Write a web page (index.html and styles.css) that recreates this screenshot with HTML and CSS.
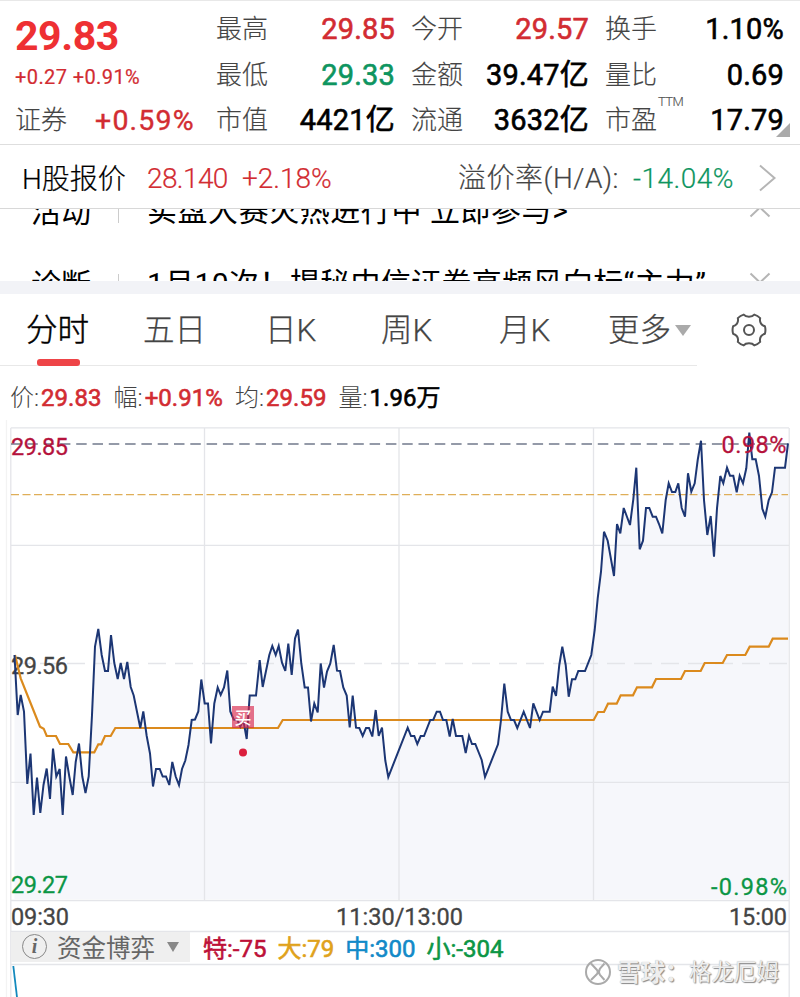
FILE: index.html
```html
<!DOCTYPE html>
<html lang="zh-CN">
<head>
    <meta charset="UTF-8">
    <meta name="viewport" content="width=device-width, initial-scale=1.0">
    <title>证券行情</title>
    <link rel="stylesheet" href="styles.css">
</head>
<body>
    <div class="app">
        <section class="quote">
            <div class="price-col">
                <div class="price">29.83</div>
                <div class="change">+0.27 +0.91%</div>
                <div class="sector"><span class="label">证券</span><span class="sector-value">+0.59%</span></div>
            </div>
            <div class="stats">
                <div class="stat"><span class="label">最高</span><span class="value up">29.85</span></div>
                <div class="stat"><span class="label">今开</span><span class="value up">29.57</span></div>
                <div class="stat"><span class="label">换手</span><span class="value">1.10%</span></div>
                <div class="stat"><span class="label">最低</span><span class="value down">29.33</span></div>
                <div class="stat"><span class="label">金额</span><span class="value">39.47亿</span></div>
                <div class="stat"><span class="label">量比</span><span class="value">0.69</span></div>
                <div class="stat"><span class="label">市值</span><span class="value">4421亿</span></div>
                <div class="stat"><span class="label">流通</span><span class="value">3632亿</span></div>
                <div class="stat"><span class="label">市盈<span class="ttm">TTM</span></span><span class="value">17.79</span></div>
            </div>
            <div class="expand-corner"></div>
        </section>

        <section class="hshare">
            <span class="hshare-name">H股报价</span>
            <span class="hshare-price">28.140</span>
            <span class="hshare-change">+2.18%</span>
            <span class="premium-label">溢价率(H/A):</span>
            <span class="premium-value">-14.04%</span>
            <svg class="chevron" width="18" height="28" viewBox="0 0 18 28"><path d="M1 1.5 L15.5 14 L1 26.5"/></svg>
        </section>

        <section class="notices">
            <div class="notice">
                <span class="notice-tag">活动</span><i class="divider"></i>
                <span class="notice-text">实盘大赛火热进行中 立即参与&gt;</span>
                <svg class="arrow arrow-up" width="22" height="12" viewBox="0 0 22 12"><path d="M1.5 10.5 L11 1.5 L20.5 10.5"/></svg>
            </div>
            <div class="notice">
                <span class="notice-tag">诊断</span><i class="divider"></i>
                <span class="notice-text second">1月10次！揭秘中信证券高频风向标“主力”</span>
                <svg class="arrow arrow-down" width="22" height="12" viewBox="0 0 22 12"><path d="M1.5 1.5 L11 10.5 L20.5 1.5"/></svg>
            </div>
        </section>

        <nav class="tabs">
            <div class="tab-list">
                <span class="tab active">分时</span>
                <span class="tab">五日</span>
                <span class="tab">日K</span>
                <span class="tab">周K</span>
                <span class="tab">月K</span>
                <span class="tab more">更多<i class="triangle"></i></span>
            </div>
            <svg class="gear" width="36" height="36" viewBox="-18 -18 36 36">
                <path d="M-5.3 -15.4 Q-3.7 -13.3 0 -13.3 Q3.7 -13.3 5.3 -15.4 Q8.7 -14.4 11.2 -11.9 Q10.4 -8.8 12 -6.4 Q13.3 -4.5 15.9 -3.7 Q17 0 15.9 3.7 Q13.3 4.5 12 6.4 Q10.4 8.8 11.2 11.9 Q8.7 14.4 5.3 15.4 Q3.7 13.3 0 13.3 Q-3.7 13.3 -5.3 15.4 Q-8.7 14.4 -11.2 11.9 Q-10.4 8.8 -12 6.4 Q-13.3 4.5 -15.9 3.7 Q-17 0 -15.9 -3.7 Q-13.3 -4.5 -12 -6.4 Q-10.4 -8.8 -11.2 -11.9 Q-8.7 -14.4 -5.3 -15.4 Z"/>
                <circle r="5"/>
            </svg>
        </nav>

        <div class="summary">
            <span class="item">价:<b class="up">29.83</b></span>
            <span class="item">幅:<b class="up">+0.91%</b></span>
            <span class="item">均:<b class="up">29.59</b></span>
            <span class="item">量:<b>1.96万</b></span>
        </div>

        <div class="chart-area">
            <svg class="chart" width="800" height="577" viewBox="0 420 800 577">
                <path class="area" id="area"/>

                <!-- grid -->
                <g class="grid">
                    <path d="M10.8 428 V997 M789.2 428 V997 M10.8 427.8 H789 M10.8 900.5 H789"/>
                    <path d="M204.5 428 V900 M399 428 V900 M593.5 428 V900 M11 545.3 H789 M11 782.3 H789"/>
                    <path class="mid" d="M13 663.5 H789"/>
                    <path d="M11 931.5 H789 M11 964.5 H789"/>
                    <path class="edge" d="M6.5 420 V997"/>
                </g>
                <path class="high-line" d="M11 444 H788"/>
                <path class="last-line" d="M11 494.6 H788"/>
                <text class="axis mid-text" x="11" y="673.5" textLength="57">29.56</text>

                <!-- average -->
                <path class="avg" d="M15 655 L20.7 678.3 40 726.7 43.7 728.7 46.7 736 56 736 60 744 68.3 744 73.3 752.3 94.3 752.3 98.3 744.3 101.3 744.3 105 736 110.7 736 115.3 728 278 728 282.7 720 593.7 720 598 712 604 712 608 703.7 616.7 703.7 620.7 695.3 633 695.3 637 687.3 652 687.3 656 679 681 679 685 671 700.7 671 704.7 663 722.7 663 727 655 745.3 655 749.7 646.7 768.7 646.7 772.7 638.7 788 638.7"/>

                <!-- price -->
                <path class="line" id="line" d="M14.5 655 L17.7 715 20.7 695 24 711.5 27.3 784 30.5 753.5 33.7 815 37 777.5 40.3 813 43.5 785 46.7 768.5 50 799 53 748.5 56.3 776.5 59.7 769 62.7 815 66 756.5 69.3 776.5 72.7 795 75.7 762 79 743.5 82.3 776.5 85.5 793 88.7 776.5 92 715 95 646.5 98.3 629 101.7 655 105 671 108 671 111 635 114.3 663 117.7 679 120.7 663 124 679 127.3 662 130.7 687 133.7 695.5 140.3 728 143.3 711.5 146.7 736 150 753.5 153 786.5 156 769 159.7 769 162.7 776.5 166 776.5 169.3 785 172.3 762 175.7 776.5 179 785 182 769 185.3 760.5 188.5 745 191.7 720 195 719.5 198.3 711.5 201.3 679.5 204.7 703.5 208 703.5 211 743.5 214.3 703.5 217.7 687.5 220.7 695 224 687.5 227.3 670.5 230.3 711.5 233.7 719.5 237.3 720 240.3 726.5 243.3 720 246.7 739 249.7 695.5 256 695.5 259.7 660 262.7 687 269.3 655 272.3 646 275.7 655 278.7 646 282 662.7 285.3 671 288.3 643.5 291.7 675 295 638.5 298 629.5 301.3 663.5 304.7 687.5 308 687.5 311 721.5 314.3 703.5 317.7 712.5 320.7 663.5 324 687.5 327 671.5 330.3 663.5 333.7 645 337 670.7 340 671 343.3 687.5 346.7 695.5 349.7 727.5 352.7 695.5 356 727.7 359.3 728 362.7 736 366 728 369 728 372.3 736.5 375.7 710 378.7 736 382 727.5 385.3 760.5 388.3 777 407.7 727.7 411 736 414.3 736 417.3 744 420.7 736 424 736 430.3 720 433.3 719.7 436.7 711.7 440 711.7 443 720 446.3 720 449.7 736.5 452.7 719 456 736 462.3 736 465.7 753 469 736 472 744 475.3 744 481.7 760 485 777 498 744.3 501 720 504.3 683.5 507.7 711.7 511 720 514 720 517.3 728 523.7 711.7 530 728 533.3 703.3 539.7 720 543 711.7 549.7 711.7 552.7 686.7 556 696 559.3 665 562.3 646.7 565.7 665 568.7 696.7 572 679.3 575.3 679.3 578.3 671 585 671 591.3 655 594.7 630 597.7 598.3 601 571.7 604 531.7 607.7 540.7 614 576 617 524 620.3 533.3 623.7 508 630 525 633.3 499.3 636.3 467.7 638 510 639.7 549.3 643 540.7 646 508 649.3 508 652.7 516.7 656 516.7 659 524 662.3 533.3 665.7 500 668.7 483.3 672 492 675.3 492 678.3 483.3 681.7 508 685 516.7 688 473.3 691.3 491.7 694.7 483.3 697.7 460 701 440.7 704 500 707.3 535 710.7 516 714 556.7 717 508.3 720.3 476 723.3 483.3 727 467.7 730 475.7 733.3 475.7 736.7 492.3 739.7 475.7 743 483.3 746.3 468.3 749.3 432.7 752.3 459.3 755.7 459.3 759 476 762.3 508.7 765.3 516.7 768.7 500 772 492.3 775 467.7 785 467.7 788 443.3"/>

                <!-- buy marker -->
                <rect class="buy-box" x="232" y="706" width="22" height="22"/>
                <text class="buy-text" x="243" y="723.5">买</text>
                <circle class="buy-dot" cx="243" cy="752.5" r="4"/>

                <text class="axis high-text" x="11" y="454.5" textLength="57">29.85</text>
                <text class="axis high-text" x="721.5" y="453" textLength="65">0.98%</text>
                <text class="axis low-text" x="11" y="893" textLength="57">29.27</text>
                <text class="axis low-text" x="711" y="895" textLength="76">-0.98%</text>
                <text class="axis" x="11" y="925" textLength="58">09:30</text>
                <text class="axis" x="336" y="925" textLength="127">11:30/13:00</text>
                <text class="axis" x="729" y="925" textLength="58">15:00</text>
                <path class="flow-line" d="M13.3 966 L17 997"/>
            </svg>

            <div class="flow">
                <div class="flow-picker">
                    <span class="info">i</span>
                    <span class="flow-name">资金博弈</span>
                    <i class="flow-triangle"></i>
                </div>
                <span class="flow-item huge">特:-75</span>
                <span class="flow-item big">大:79</span>
                <span class="flow-item middle">中:300</span>
                <span class="flow-item small">小:-304</span>
            </div>

            <div class="watermark">
                <svg width="28" height="28" viewBox="0 0 28 28">
                    <circle cx="14" cy="14" r="12"/>
                    <path d="M7 5.5 L13 12 Q14.5 14 13 16 L7 22 M20.5 5.5 L16 10.5 Q14 14 16 17 L20.5 22"/>
                </svg>
                <span class="wm-brand">雪球：</span><span class="wm-user">格龙厄姆</span>
            </div>
        </div>
    </div>

    <script>
        // Close the price line down to the bottom of the chart for the fill
        const line = document.getElementById('line');
        const area = document.getElementById('area');
        area.setAttribute('d', line.getAttribute('d') + ' V899 H14.5 Z');
    </script>
</body>
</html>
```

FILE: styles.css
```css
* {
    box-sizing: border-box;
}

body {
    margin: 0;
    background-color: #fff;
    color: #000;
    font-family: Roboto, "Noto Sans CJK SC", sans-serif;
}

.app {
    width: 800px;
    height: 997px;
    overflow: hidden;
}

.up {
    color: #d22c32;
}

.down {
    color: #0e9560;
}

/* quote header */
.quote {
    position: relative;
    display: flex;
    height: 145px;
    padding: 6px 15px 0;
    border-top: 1px solid #e8e8e8;
    border-bottom: 1px solid #dedede;
}

.price-col {
    width: 202px;
}

.price {
    height: 56px;
    line-height: 58px;
    font-size: 41px;
    font-weight: 700;
    letter-spacing: -0.4px;
    color: #ee3033;
}

.change {
    height: 28px;
    line-height: 29px;
    font-size: 20px;
    letter-spacing: 0.4px;
    color: #d22c32;
    white-space: nowrap;
    -webkit-text-stroke: 0.2px;
}

.sector {
    display: flex;
    height: 46px;
    line-height: 59px;
}

.label {
    position: relative;
    font-size: 26px;
    font-weight: 300;
    color: #444;
    -webkit-text-stroke: 0.15px;
}

.sector-value {
    margin-left: 28px;
    font-size: 28.5px;
    letter-spacing: 1.2px;
    color: #d22c32;
    -webkit-text-stroke: 0.4px;
}

.stats {
    display: grid;
    grid-template-columns: 179px 178px 179px;
    grid-auto-rows: 45.5px;
    column-gap: 16px;
    margin-left: -1px;
}

.stat {
    display: flex;
    justify-content: space-between;
    line-height: 45px;
    white-space: nowrap;
}

.value {
    font-size: 29px;
    letter-spacing: 0.2px;
    -webkit-text-stroke: 0.6px;
}

.ttm {
    position: absolute;
    left: 53px;
    top: -19px;
    font-size: 13px;
    letter-spacing: -0.6px;
    color: #555;
}

.expand-corner {
    position: absolute;
    right: 10px;
    bottom: 7px;
    border-left: 14px solid transparent;
    border-bottom: 14px solid #aaa;
}

/* H share row */
.hshare {
    display: flex;
    align-items: center;
    height: 64px;
    padding: 2px 22px 0;
    border-bottom: 1px solid #d8d8d8;
    font-size: 28px;
    font-weight: 300;
    white-space: nowrap;
    -webkit-text-stroke: 0.2px;
}

.hshare-name {
    width: 125px;
    padding-bottom: 2px;
}

.hshare-price {
    width: 95px;
    padding-top: 2px;
    letter-spacing: -0.6px;
    color: #d22c32;
}

.hshare-change {
    width: 216px;
    padding-top: 2px;
    color: #d22c32;
}

.premium-label {
    width: 175px;
    padding-bottom: 3px;
    font-size: 28px;
    letter-spacing: 0.5px;
    color: #444;
}

.premium-value {
    width: 126px;
    padding-top: 2px;
    letter-spacing: 0.5px;
    color: #0e9560;
}

.chevron,
.arrow {
    flex-shrink: 0;
    fill: none;
    stroke: #b5b5b5;
    stroke-width: 2;
}

.notices {
    display: flex;
    flex-direction: column;
    justify-content: center;
    height: 72px;
    overflow: hidden;
}

.notice {
    display: flex;
    flex-shrink: 0;
    align-items: center;
    height: 73px;
    padding: 0 29px 0 31px;
    font-size: 30px;
    white-space: nowrap;
}

.notice-tag {
    width: 87px;
}

.divider {
    width: 1px;
    height: 22px;
    margin-top: 7px;
    background-color: #ccc;
}

.notice-text {
    flex: 1;
    margin: -2px 0 0 28px;
    letter-spacing: 0.55px;
}

.notice-text.second {
    letter-spacing: 0.35px;
}

.arrow-up {
    margin-top: 7px;
}

.arrow-down {
    margin-bottom: 8px;
}

/* tabs */
.tabs {
    display: flex;
    height: 85px;
    border-top: 13px solid #f2f3f7;
}

.tab-list {
    display: grid;
    grid-template-columns: 117px 122px 116px 118px 109px 90px;
    width: 697px;
    padding-left: 26px;
    border-bottom: 1px solid #e8e8e8;
}

.tab {
    position: relative;
    font-size: 31.5px;
    font-weight: 300;
    line-height: 73px;
    color: #444;
    white-space: nowrap;
    -webkit-text-stroke: 0.25px;
}

.tab.active {
    color: #000;
    -webkit-text-stroke: 0.5px;
}

.tab.active::after {
    content: "";
    position: absolute;
    left: 11px;
    top: 65px;
    width: 43px;
    height: 7px;
    border-radius: 3px;
    background-color: #ee4447;
}

.triangle {
    display: inline-block;
    margin-left: 4px;
    border: 8.5px solid transparent;
    border-top: 11px solid #aaa;
    border-bottom: 0;
    vertical-align: 5px;
}

.gear {
    margin: 18px 0 0 34px;
    fill: none;
    stroke: #555;
    stroke-width: 2;
    stroke-linejoin: round;
}

/* price summary */
.summary {
    display: flex;
    gap: 12px;
    height: 54px;
    padding-left: 10px;
    font-size: 24px;
    font-weight: 300;
    line-height: 65px;
    color: #444;
    white-space: nowrap;
}

.summary b {
    margin-left: 2px;
    font-weight: 400;
    letter-spacing: 0.05px;
    -webkit-text-stroke: 0.6px;
}

.summary b:not(.up) {
    color: #000;
}

/* chart */
.chart-area {
    position: relative;
    height: 577px;
}

.chart {
    display: block;
    fill: none;
}

.area {
    fill: #f6f7fb;
}

.grid {
    stroke: #e4e5e9;
    stroke-width: 1.3;
}

.grid .mid {
    stroke-dasharray: 18 9;
}

.grid .edge {
    stroke: #f3f3f3;
}

.high-line {
    stroke: #717a8c;
    stroke-width: 1.7;
    stroke-dasharray: 10.5 5.8;
}

.last-line {
    stroke: #dfae58;
    stroke-width: 1.2;
    stroke-dasharray: 8 3.5;
}

.avg {
    stroke: #db8a1d;
    stroke-width: 2.2;
}

.line {
    stroke: #1c3674;
    stroke-width: 2;
}

.axis {
    fill: #444;
    stroke: #444;
    stroke-width: 0.3;
    font-size: 23.5px;
}

.high-text {
    fill: #b5123c;
    stroke: #b5123c;
}

.low-text {
    fill: #0b9645;
    stroke: #0b9645;
}

.buy-box {
    fill: #d8284c;
    fill-opacity: 0.65;
}

.buy-text {
    fill: #fff;
    font-size: 17px;
    font-weight: 500;
    text-anchor: middle;
}

.buy-dot {
    fill: #db1f3d;
}

.flow-line {
    stroke: #1389bd;
    stroke-width: 1.8;
}

/* money flow legend, sits on the chart canvas */
.flow {
    position: absolute;
    left: 11px;
    top: 511px;
    display: flex;
    align-items: center;
    height: 31px;
    font-size: 24px;
    white-space: nowrap;
}

.flow-picker {
    display: flex;
    align-items: center;
    width: 179px;
    height: 30px;
    margin-right: 13px;
    padding-left: 11px;
    background-color: #efefef;
    color: #666;
}

.info {
    width: 25px;
    height: 25px;
    border: 1.5px solid #888;
    border-radius: 50%;
    font: italic bold 20px/22px "Liberation Serif", serif;
    text-align: center;
}

.flow-name {
    margin-left: 10px;
    font-size: 24.5px;
}

.flow-triangle {
    margin-left: 12px;
    border: 6.5px solid transparent;
    border-top: 10px solid #888;
    border-bottom: 0;
}

.flow-item {
    margin-right: 11px;
    -webkit-text-stroke: 0.6px;
}

.huge {
    color: #bd1038;
}

.big {
    color: #e0a21b;
}

.middle {
    color: #128ac8;
}

.small {
    color: #0b9645;
}

.watermark {
    position: absolute;
    left: 584px;
    top: 537px;
    display: flex;
    align-items: center;
    height: 30px;
    color: #eee;
    font-size: 24px;
    text-shadow: 1px 1px 1px #888, 0 0 1px #aaa;
    white-space: nowrap;
}

.watermark svg {
    margin-right: 5px;
    fill: none;
    stroke: #aaa;
    stroke-width: 2;
}

.wm-brand {
    width: 72px;
    padding-bottom: 4px;
    font-weight: 700;
}

.wm-user {
    padding-bottom: 4px;
    font-size: 22.5px;
}
```
